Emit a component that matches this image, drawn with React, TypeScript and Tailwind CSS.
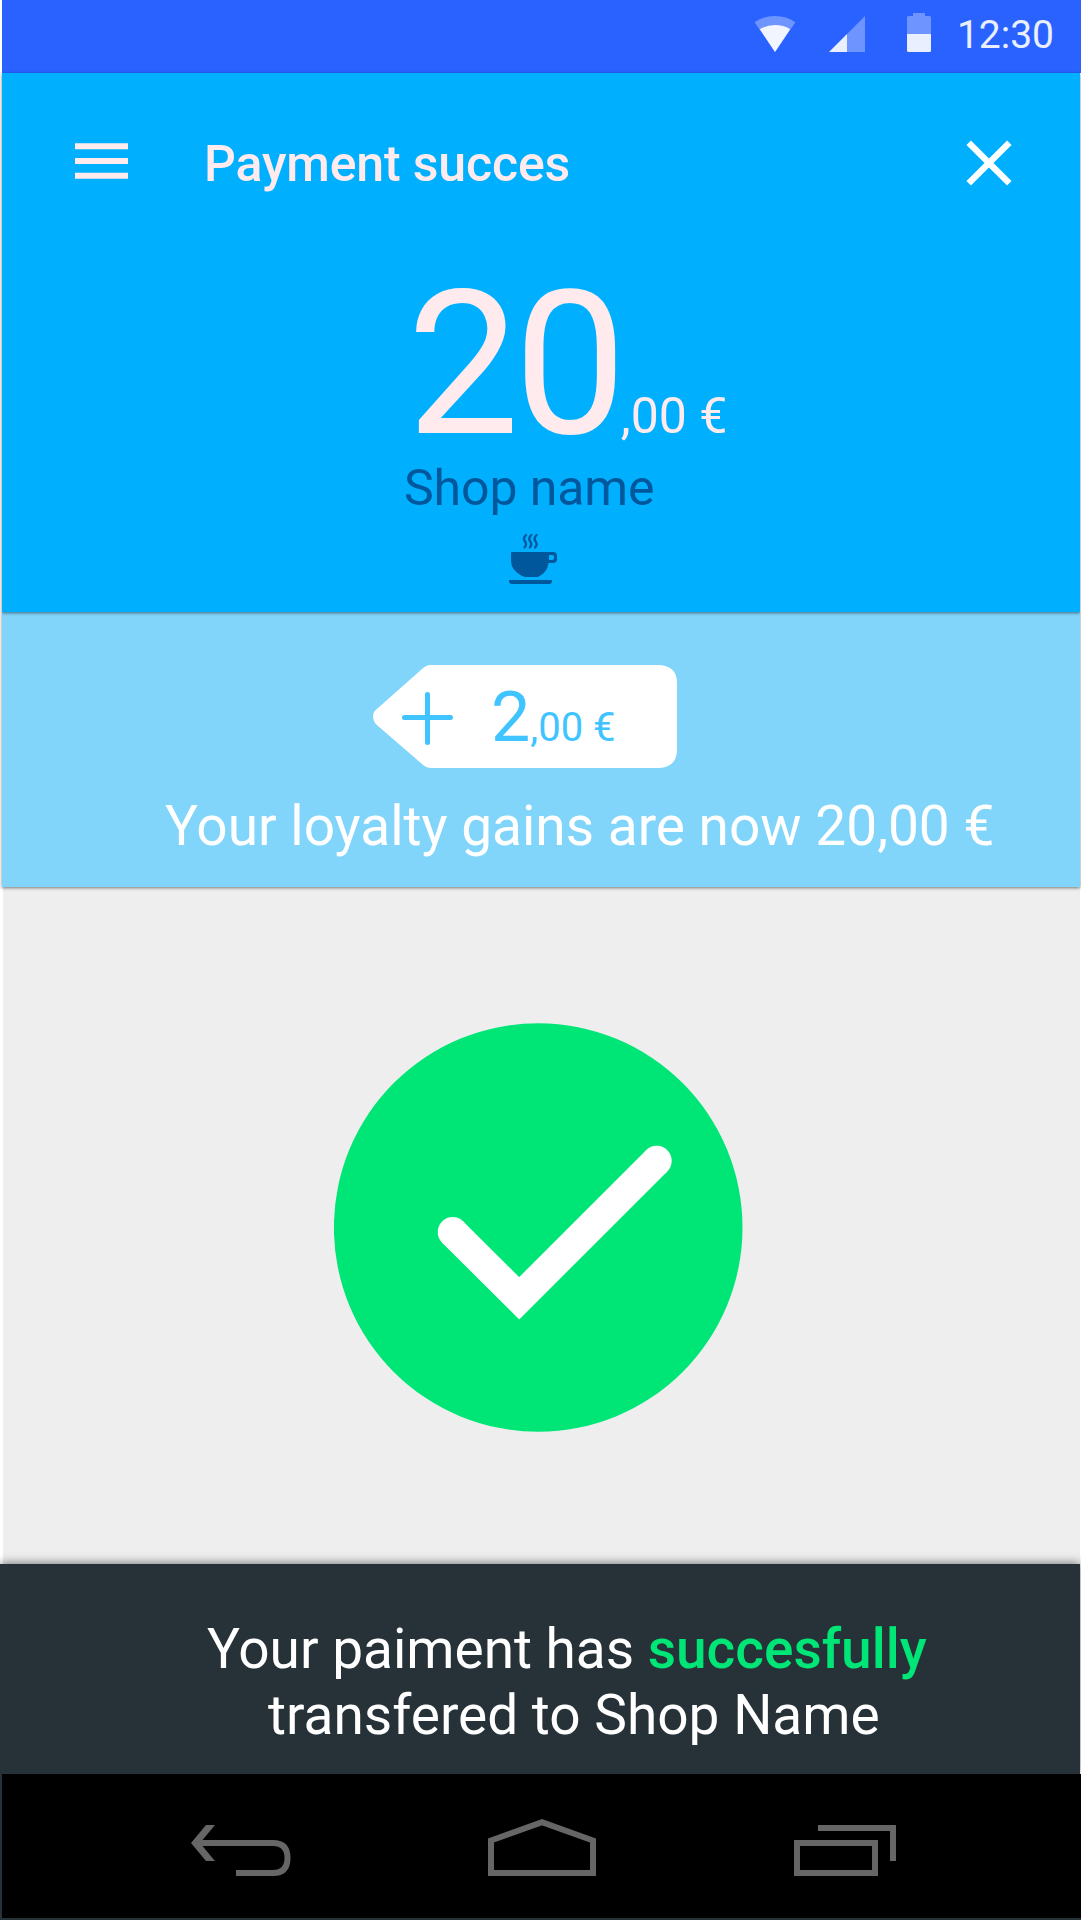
import type { ReactNode } from 'react';

function StatusBar() {
  return (
    <div className="ml-0.5 flex h-[73px] shrink-0 items-start justify-end bg-[#2962ff] pr-[27px]">
      <svg className="mt-[13px] h-[39px] w-[177px]" viewBox="754 13 177 39" fill="#fff">
        <path d="M775 52 754.6 22.2Q763.500 16 775 16t20.400 6.200Z" opacity=".32" />
        <path d="M775 52 759.800 29.200Q766.500 25 775 25t15.200 4.200Z" opacity=".9" />
        <path d="M865 16v36h-18V34Z" opacity=".32" />
        <path d="M829 52h18V34Z" opacity=".9" />
        <path d="M907 34V17.500Q907 16 908.500 16H913v-3h12v3h4.500q1.500 0 1.500 1.500V34Z" opacity=".32" />
        <path d="M907 34h24v16.500q0 1.500-1.500 1.500h-21q-1.500 0-1.500-1.500Z" opacity=".9" />
      </svg>
      <span className="ml-[26px] mt-[15px] text-[39px] leading-[40px] text-white/90">12:30</span>
    </div>
  );
}

function CupIcon() {
  return (
    <svg className="ml-[507px] mt-[15px] h-[52px] w-[48px]" viewBox="509 533 48 52" fill="#01579b">
      <path
        d="M526 535q-3.500 3.200-1.100 6.300t-.4 6.200M531.300 535q-3.500 3.200-1.100 6.300t-.4 6.200M536.600 535q-3.500 3.200-1.100 6.300t-.4 6.200"
        fill="none"
        stroke="#01579b"
        strokeWidth="2.300"
        strokeLinecap="round"
      />
      <path
        fillRule="evenodd"
        d="M512 552h41q4 0 4 4v3q0 4-4 4h-4.500q-.8 9.500-10.500 14h-13q-14-5-14-17v-7q0-1 1-1Zm37 3v5h3.200q1.800 0 1.800-1.800v-1.400q0-1.800-1.800-1.800Z"
      />
      <path d="M509 580h43v1q0 3-3 3h-37q-3 0-3-3Z" />
    </svg>
  );
}

function Header() {
  return (
    <header className="relative z-20 ml-0.5 mr-px h-[539px] shrink-0 bg-[#00b0ff] pt-[61px] shadow-[0_1px_3px_rgba(0,0,0,0.5)]">
      <div className="flex h-[60px] items-start">
        <svg className="ml-[73px] mt-[9px] h-[36px] w-[53px]" viewBox="0 0 53 36" fill="#ffebee">
          <path d="M0 .3h53v6H0zM0 15h53v6H0zM0 29.700h53v6H0z" />
        </svg>
        <h1 className="ml-[76px] text-[50px] font-medium leading-[60px] tracking-[-0.15px] text-[#ffebee]">
          Payment succes
        </h1>
        <svg
          className="ml-auto mr-[68px] mt-[6px] h-[46px] w-[46px]"
          viewBox="0 0 46 46"
          stroke="#fff"
          strokeWidth="6.300"
        >
          <path d="m2.700 2.700 40.600 40.600M43.300 2.700 2.700 43.300" />
        </svg>
      </div>
      <div className="ml-[405px] mt-[81px] flex h-[180px] items-baseline text-[#ffebee]">
        <span className="text-[200px] leading-[180px] tracking-[-5.500px]">20</span>
        <span className="text-[50px] leading-none">,00 €</span>
      </div>
      <p className="ml-[402px] mt-[3px] text-[50px] leading-[60px] tracking-[-0.1px] text-[#01579b]">
        Shop name
      </p>
      <CupIcon />
    </header>
  );
}

function Loyalty() {
  return (
    <section className="relative z-10 ml-0.5 mr-px h-[275px] shrink-0 bg-[#81d4fa] pt-[53px] shadow-[0_1px_3px_rgba(0,0,0,0.5)]">
      <div className="relative ml-[371px] h-[103px] w-[304px]">
        <svg className="absolute inset-0 h-full w-full" viewBox="0 0 304 103">
          <path
            d="M58 0H286Q304 1 304 18V85Q304 102 286 103H58Q53 103 49 99L5 61Q0 57 0 51.500T5 43L49 4Q53 0 58 0Z"
            fill="#fff"
          />
          <path d="M54.500 29.500v48M31.500 52.500h46" stroke="#40c4ff" strokeWidth="5" strokeLinecap="round" />
        </svg>
        <div className="relative flex items-baseline pl-[118px] pt-px text-[#40c4ff]">
          <span className="text-[70px] leading-[103px]">2</span>
          <span className="text-[40px] leading-none">,00 €</span>
        </div>
      </div>
      <p className="ml-[163px] mt-[28px] text-[55px] leading-[60px] text-white">
        Your loyalty gains are now 20,00 €
      </p>
    </section>
  );
}

function NavButton({ label, children }: { label: string; children: ReactNode }) {
  return (
    <button aria-label={label} className="h-[57px] w-[108px]">
      <svg className="h-[57px] w-[108px]" viewBox="0 0 108 57" fill="none" stroke="#666" strokeWidth="6">
        {children}
      </svg>
    </button>
  );
}

export default function App() {
  return (
    <div className="flex h-[1920px] w-[1081px] flex-col overflow-hidden bg-white font-['Roboto',sans-serif]">
      <StatusBar />
      <Header />
      <Loyalty />
      <main className="ml-[3px] mr-px flex h-[677px] shrink-0 items-start bg-[#eee] pt-[136px]">
        <svg className="ml-[331px] h-[409px] w-[409px]" viewBox="334 1023.200 409 409">
          <circle cx="538.200" cy="1227.700" r="204.300" fill="#00e676" />
          <path d="m452.700 1232.300 66.500 66.200L656.700 1161" fill="none" stroke="#fff" strokeWidth="30" />
          <circle cx="452.700" cy="1232.300" r="15" fill="#fff" />
          <circle cx="656.700" cy="1161" r="15" fill="#fff" />
        </svg>
      </main>
      <div className="relative z-10 mr-px h-[210px] shrink-0 bg-[#263238] pt-[52px] text-[55px] leading-[66px] text-white shadow-[0_-1px_9px_rgba(0,0,0,0.5)]">
        <p className="pl-[207px] tracking-[-0.02px]">
          Your paiment has <span className="font-medium text-[#00e676]">succesfully</span>
        </p>
        <p className="pl-[268px]">transfered to Shop Name</p>
      </div>
      <div className="relative z-20 h-[146px] shrink-0 bg-[#263238] pb-0.5 pl-0.5">
        <nav className="flex h-[144px] items-start bg-black pl-[189px] pt-[45px]">
          <NavButton label="Back">
            <path d="M5 24h77q14.500 0 14.500 15T82 54H45" />
            <path d="M15 6h9L9 24l15 18h-9L0 24Z" fill="#666" stroke="none" />
          </NavButton>
          <div className="ml-[189px]">
            <NavButton label="Home">
              <path d="M3 54V21.500L54 3.200l51 18.300V54Z" />
            </NavButton>
          </div>
          <div className="ml-[198px]">
            <NavButton label="Recent apps">
              <path d="M3 24h78v30H3ZM24 9h75v33" />
            </NavButton>
          </div>
        </nav>
      </div>
    </div>
  );
}
